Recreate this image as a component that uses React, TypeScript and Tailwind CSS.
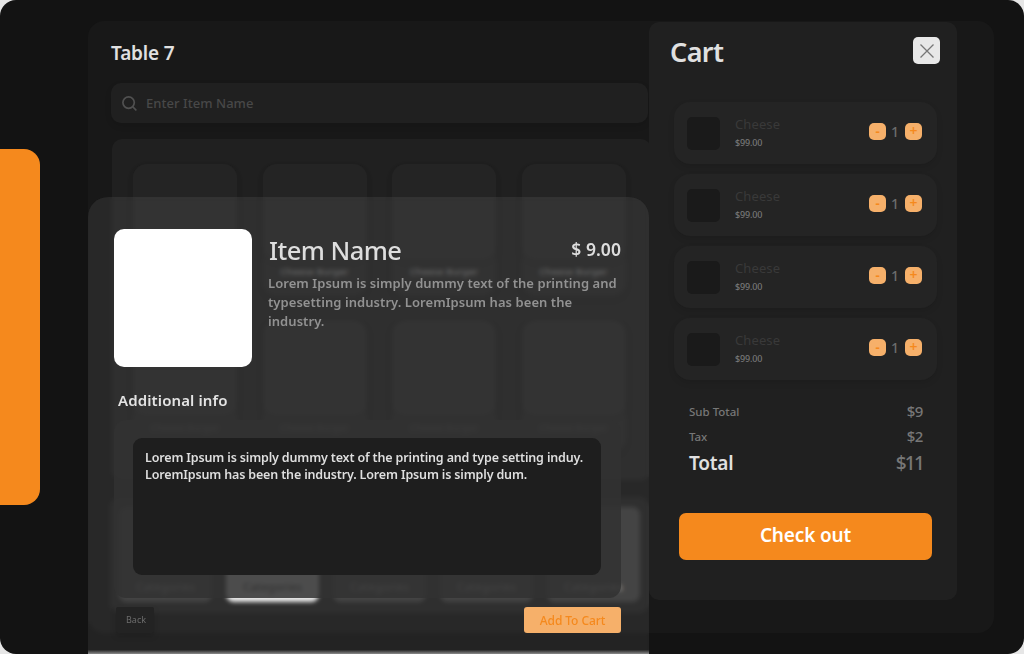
import React from "react";

const foods = [0, 1, 2, 3, 4, 5, 6, 7];
const categories = [0, 1, 2, 3, 4];
const cart = [0, 1, 2, 3];

function Food() {
  return (
    <div className="h-[132px] w-[104px] rounded-[14px] bg-[#232323] shadow-[0_3px_8px_rgba(0,0,0,0.06)]">
      <div className="h-[96px] rounded-[14px] bg-[#242424] shadow-[0_3px_6px_rgba(0,0,0,0.06)]" />
      <div className="mt-[5px] text-center text-[9.5px] leading-[14px] font-semibold text-[#555]">Cheese Burger</div>
    </div>
  );
}

function Stepper() {
  return (
    <div className="mt-[-4px] flex items-center">
      <button className="flex h-[17px] w-[17px] items-center justify-center rounded-[5px] bg-[#f6b06a] text-[13px] leading-none font-bold text-[#f5891d]">-</button>
      <span className="w-[19px] pr-px text-center text-[14px] leading-[17px] font-medium text-[#6c6c6c]">1</span>
      <button className="flex h-[17px] w-[17px] items-center justify-center rounded-[5px] bg-[#f6b06a] text-[14px] leading-none font-semibold text-[#f5891d]">+</button>
    </div>
  );
}

function CartRow() {
  return (
    <div className="flex h-[62px] items-center rounded-[16px] bg-[#242424] pr-[15px] pl-[13px] shadow-[0_3px_6px_rgba(0,0,0,0.1)]">
      <div className="h-[33px] w-[33px] rounded-[5px] bg-[#1a1a1a]" />
      <div className="ml-[15px] flex-1">
        <div className="relative top-[-1px] text-[13px] leading-[18px] tracking-[0.1px] text-[#393939]">Cheese</div>
        <div className="text-[9px] leading-[17px] font-medium tracking-[-0.15px] text-[#777]">$99.00</div>
      </div>
      <Stepper />
    </div>
  );
}

function Cart() {
  return (
    <aside className="absolute top-[22px] left-[649px] h-[578px] w-[308px] rounded-[10px] bg-[#202020]">
      <header className="flex items-start justify-between pt-[15px] pr-[17px] pl-[21px]">
        <h2 className="mt-[-3px] text-[27px] leading-[36px] font-semibold tracking-[-0.6px] text-[#e0e0e0]">Cart</h2>
        <button className="flex h-[27px] w-[27px] items-center justify-center rounded-[5px] bg-[#e8e8e8] pl-[1px]">
          <svg width="16" height="16" viewBox="0 0 16 16" fill="none" stroke="#777" strokeWidth="1.3">
            <path d="M1.5 1.5l13 13M14.5 1.5l-13 13" />
          </svg>
        </button>
      </header>
      <div className="mt-[32px] flex flex-col gap-[10px] pr-[20px] pl-[25px]">
        {cart.map((i) => (
          <CartRow key={i} />
        ))}
      </div>
      <div className="mt-[19px] pr-[34px] pl-[40px] font-medium text-[#777]">
        <div className="flex h-[25px] items-center justify-between text-[11.5px]">
          <span>Sub Total</span>
          <span className="pb-px text-[15px] tracking-[-0.4px]">$9</span>
        </div>
        <div className="flex h-[26px] items-center justify-between text-[11.5px]">
          <span>Tax</span>
          <span className="pb-px text-[15px] tracking-[-0.4px]">$2</span>
        </div>
        <div className="flex h-[27px] items-center justify-between text-[19px]">
          <span className="font-semibold tracking-[-0.2px] text-[#e0e0e0]">Total</span>
          <span className="text-[19px] font-medium tracking-[-1.8px]">$11</span>
        </div>
      </div>
      <button className="mt-[36px] ml-[30px] flex h-[47px] w-[253px] items-center justify-center rounded-[7px] bg-[#f5891d] pb-[3px] text-[19px] font-semibold tracking-[-0.15px] text-white">
        Check out
      </button>
    </aside>
  );
}

function ItemDialog() {
  return (
    <section className="absolute top-[197px] left-[88px] h-[457px] w-[561px] rounded-t-[20px] bg-[rgba(255,255,255,0.07)] px-[26px] pt-[32px] backdrop-blur-[2px]">
      <div className="flex">
        <div className="h-[138px] w-[138px] rounded-[10px] bg-white" />
        <div className="ml-[16px] w-[353px]">
          <div className="flex justify-between pt-[3px] pl-[1px]">
            <h2 className="text-[25.5px] leading-[36px] font-medium tracking-[-0.55px] whitespace-nowrap text-[#dedede]">Item Name</h2>
            <span className="text-[17.5px] leading-[35px] font-semibold tracking-[0.05px] text-[#dedede]">$ 9.00</span>
          </div>
          <p className="mt-[6px] text-[13px] leading-[19px] font-semibold tracking-[0.06px] whitespace-nowrap text-[#929292]">
            Lorem Ipsum is simply dummy text of the printing and
            <br />
            typesetting industry. LoremIpsum has been the
            <br />
            industry.
          </p>
        </div>
      </div>
      <h3 className="mt-[22px] ml-[4px] text-[15px] leading-[22px] font-semibold tracking-[0.12px] text-[#e4e4e4]">Additional info</h3>
      <div className="mt-[9px] h-[178px] w-[507px] rounded-[12px] bg-[rgba(50,50,50,0.86)] pt-[18px] pl-[19px]">
        <div className="h-[137px] w-[468px] rounded-[9px] bg-[#1e1e1e] px-[12px] pt-[11px] text-[12.5px] leading-[17px] font-semibold tracking-[-0.155px] whitespace-nowrap text-[#dedede]">
          Lorem Ipsum is simply dummy text of the printing and type setting induy.
          <br />
          LoremIpsum has been the industry. Lorem Ipsum is simply dum.
        </div>
      </div>
      <div className="mt-[9px] flex justify-between pl-[2px]">
        <button className="h-[26px] w-[38px] rounded-[2px] bg-[#232323] pl-[2px] text-[9px] text-[#6c6c6c] shadow-[0_3px_6px_rgba(0,0,0,0.16)]">Back</button>
        <button className="mr-[2px] h-[26px] w-[97px] rounded-[3px] bg-[#f6b06a] pt-[2px] text-[12px] font-medium tracking-[-0.1px] text-[#f5891d]">Add To Cart</button>
      </div>
      <div className="absolute bottom-0 left-0 h-[4px] w-full bg-linear-to-b from-[#2a2a2a] to-[#8c8c8c]" />
    </section>
  );
}

export default function App() {
  return (
    <div className="h-[654px] w-[1024px] overflow-hidden bg-[#e6e6e6] font-['Noto_Sans',sans-serif]">
      <div className="relative flex h-[654px] overflow-hidden rounded-[16px] bg-[#131313]">
        <nav className="mt-[149px] h-[356px] w-[40px] rounded-r-[16px] bg-[#f5891d]" />
        <main className="mt-[21px] ml-[48px] h-[612px] w-[906px] rounded-[16px] bg-[#181818] pt-[18px] pl-[22px]">
          <h1 className="pl-[1px] text-[19px] leading-[28px] font-semibold tracking-[-0.15px] text-[#e0e0e0]">Table 7</h1>
          <div className="mt-[16px] ml-[1px] flex h-[40px] w-[537px] items-center rounded-[10px] bg-[#202020] pl-[11px] text-[13px] text-[#484848] shadow-[0_3px_6px_rgba(0,0,0,0.1)]">
            <svg className="mr-[9px]" width="15" height="15" viewBox="0 0 15 15" fill="none" stroke="#505050" strokeWidth="1.7" strokeLinecap="round">
              <circle cx="6.6" cy="6.6" r="5.7" />
              <path d="M11 11l2.8 2.8" />
            </svg>
            <span className="pt-px font-medium tracking-[0.05px]">Enter Item Name</span>
          </div>
          <div className="mt-[16px] ml-[2px] grid h-[341px] w-[539px] grid-cols-[repeat(4,104px)] content-start gap-x-[25.5px] gap-y-[24px] rounded-[10px] bg-[#202020] pt-[25px] pl-[21px]">
            {foods.map((i) => (
              <Food key={i} />
            ))}
          </div>
          <div className="mt-[17px] flex h-[116px] w-[539px] gap-[14px] rounded-[10px] bg-[#202020] pt-[10px] pl-[9px]">
            {categories.map((i) => (
              <div
                key={i}
                className={
                  i === 1
                    ? "flex h-[95px] w-[93px] shrink-0 items-end justify-center rounded-[8px] bg-[#e8e8e8] pb-[7px] text-[11.5px] font-medium text-[#333]"
                    : "flex h-[95px] w-[93px] shrink-0 items-end justify-center rounded-[8px] bg-[#363636] pb-[7px] text-[11.5px] font-medium text-[#909090]"
                }
              >
                Categories
              </div>
            ))}
          </div>
        </main>
        <ItemDialog />
        <Cart />
      </div>
    </div>
  );
}
